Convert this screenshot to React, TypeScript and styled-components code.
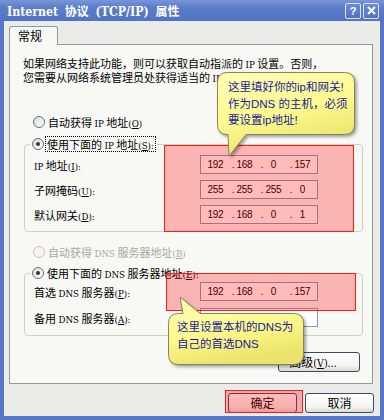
import * as React from 'react';
import styled, { createGlobalStyle } from 'styled-components';

const CJK = `"Noto Sans CJK SC", "Liberation Sans", sans-serif`;

const GlobalStyle = createGlobalStyle`
	*, *::before, *::after { box-sizing: border-box; }
	html, body { margin: 0; padding: 0; }
	body { background: #ffffff; overflow: hidden; }
`;

type CalloutProps = {
	x: number;
	y: number;
	w: number;
	h: number;
	tail: 'top' | 'bottom';
	base: [number, number];
	tip: [number, number];
	pt: number;
	pl: number;
	lh: number;
	children: React.ReactNode;
};

const Callout = ({ x, y, w, h, tail, base, tip, pt, pl, lh, children }: CalloutProps) => {
	const gid = React.useId().replace(/:/g, '');
	const r = 10;
	const o = 0.5;
	const R = w - 0.5;
	const B = h - 0.5;
	let d = '';
	if (tail === 'bottom') {
		d = `M${o + r},${o} H${R - r} Q${R},${o} ${R},${o + r} V${B - r} Q${R},${B} ${R - r},${B} H${base[1]} L${tip[0]},${tip[1]} L${base[0]},${B} H${o + r} Q${o},${B} ${o},${B - r} V${o + r} Q${o},${o} ${o + r},${o} Z`;
	} else {
		d = `M${o + r},${o} H${base[0]} L${tip[0]},${tip[1]} L${base[1]},${o} H${R - r} Q${R},${o} ${R},${o + r} V${B - r} Q${R},${B} ${R - r},${B} H${o + r} Q${o},${B} ${o},${B - r} V${o + r} Q${o},${o} ${o + r},${o} Z`;
	}
	return (
		<CalloutWrap $x={x} $y={y} $w={w} $h={h}>
			<CalloutShape width={w} height={h}>
				<defs>
					<linearGradient id={gid} x1="0" y1="0" x2="0.35" y2="1">
						<stop offset="0" stopColor="#ffffb8" />
						<stop offset="0.6" stopColor="#fbf88a" />
						<stop offset="1" stopColor="#ebe36c" />
					</linearGradient>
				</defs>
				<path d={d} fill={`url(#${gid})`} stroke="#85855a" strokeWidth="1" />
			</CalloutShape>
			<CalloutText $pt={pt} $pl={pl} $lh={lh}>
				{children}
			</CalloutText>
		</CalloutWrap>
	);
};

const IpField = ({ value }: { value?: string[] }) => (
	<IpBox>
		{[0, 1, 2, 3].map((i) => (
			<Octet key={i}>
				<Dot>{value && i > 0 ? '.' : ''}</Dot>
				<Num>{value ? value[i] : ''}</Num>
			</Octet>
		))}
	</IpBox>
);

const App = () => {
	return (
		<Window>
			<GlobalStyle />
			<TitleBar>
				<Title>
					<Lat $size={1.02}>Internet</Lat> 协议 <Lat $size={1.02}>(TCP/IP)</Lat> 属性
				</Title>
				<CaptionButton>?</CaptionButton>
				<CaptionButton>
					<svg width="9" height="9" viewBox="0 0 9 9">
						<path d="M1 1 L8 8 M8 1 L1 8" stroke="#fff" strokeWidth="2" />
					</svg>
				</CaptionButton>
			</TitleBar>

			<Frame>
				<TabStrip>
					<Tab>常规</Tab>
				</TabStrip>
				<Panel>
					<Intro>
						<IntroLine>
							如果网络支持此功能，则可以获取自动指派的 <Lat>IP</Lat> 设置。否则，
						</IntroLine>
						<IntroLine>
							您需要从网络系统管理员处获得适当的 <Lat>IP</Lat> 设置。
						</IntroLine>
					</Intro>

					<RadioRow $top={31}>
						<RadioDot />
						<span>
							自动获得 <Lat>IP</Lat> 地址<Lat>(<Key>O</Key>)</Lat>
						</span>
					</RadioRow>

					<Group $top={8} $pt={4} $pb={7}>
						<GroupLegend>
							<LegendRow>
								<RadioDot $checked />
								<FocusLabel>
									使用下面的 <Lat>IP</Lat> 地址<Lat>(<Key>S</Key>):</Lat>
								</FocusLabel>
							</LegendRow>
						</GroupLegend>
						<Rows $gap={6}>
							<FieldLabel>
								<Lat>IP</Lat> 地址<Lat>(<Key>I</Key>):</Lat>
							</FieldLabel>
							<IpField value={['192', '168', '0', '157']} />
							<FieldLabel>
								子网掩码<Lat>(<Key>U</Key>):</Lat>
							</FieldLabel>
							<IpField value={['255', '255', '255', '0']} />
							<FieldLabel>
								默认网关<Lat>(<Key>D</Key>):</Lat>
							</FieldLabel>
							<IpField value={['192', '168', '0', '1']} />
						</Rows>
					</Group>

					<RadioRow $top={13} $disabled>
						<RadioDot $disabled />
						<span>
							自动获得 <Lat>DNS</Lat> 服务器地址<Lat>(<Key>B</Key>)</Lat>
						</span>
					</RadioRow>

					<Group $top={7} $pt={2} $pb={8}>
						<GroupLegend>
							<LegendRow>
								<RadioDot $checked />
								<span>
									使用下面的 <Lat>DNS</Lat> 服务器地址<Lat>(<Key>E</Key>):</Lat>
								</span>
							</LegendRow>
						</GroupLegend>
						<Rows $gap={7}>
							<FieldLabel>
								首选 <Lat>DNS</Lat> 服务器<Lat>(<Key>P</Key>):</Lat>
							</FieldLabel>
							<IpField value={['192', '168', '0', '157']} />
							<FieldLabel>
								备用 <Lat>DNS</Lat> 服务器<Lat>(<Key>A</Key>):</Lat>
							</FieldLabel>
							<IpField />
						</Rows>
					</Group>

					<AdvancedRow>
						<Button $w={82} $padRight={12}>
							高级<Lat>(<Key>V</Key>)...</Lat>
						</Button>
					</AdvancedRow>
				</Panel>

				<Footer>
					<Button $w={69}>确定</Button>
					<Button $w={69}>取消</Button>
				</Footer>
			</Frame>

			<RedBox $x={164} $y={145} $w={190} $h={87} />
			<RedBox $x={166} $y={273} $w={190} $h={38} />
			<RedBox $x={225} $y={390} $w={78} $h={23} />

			<Callout x={217} y={72} w={138} h={63} tail="bottom" base={[11, 29]} tip={[12, 84]} pt={7} pl={11} lh={16.5}>
				这里填好你的ip和网关!
				<br />
				作为DNS 的主机，必须
				<br />
				要设置ip地址!
			</Callout>
			<Callout x={168} y={313} w={136} h={52} tail="top" base={[15, 32]} tip={[12, -16]} pt={6} pl={9} lh={17}>
				这里设置本机的DNS为
				<br />
				自己的首选DNS
			</Callout>
		</Window>
	);
};

const Window = styled.div`
	position: relative;
	width: 384px;
	height: 420px;
	overflow: hidden;
	display: flex;
	flex-direction: column;
	font-family: ${CJK};
	font-size: 11px;
	color: #000;
`;

const TitleBar = styled.div`
	height: 21px;
	flex: none;
	display: flex;
	align-items: center;
	padding: 0 5px 0 7px;
	background: linear-gradient(#7896d8, #5c7dca 35%, #5173c3);
`;

const Title = styled.div`
	flex: 1;
	color: #ffffff;
	font-weight: bold;
	font-size: 12px;
	line-height: 21px;
	word-spacing: 4px;
	white-space: nowrap;
`;

const Lat = styled.span<{ $size?: number }>`
	font-family: 'DejaVu Serif Condensed', 'DejaVu Serif', serif;
	font-stretch: condensed;
	font-size: ${(p) => p.$size ?? 0.88}em;
	line-height: 0;
	word-spacing: 0;
`;

const Key = styled.span`
	text-decoration: underline;
`;

const CaptionButton = styled.div`
	width: 16px;
	height: 16px;
	border: 1px solid #dce4f6;
	border-radius: 2px;
	background: linear-gradient(#6d8cd8, #5072c4);
	color: #ffffff;
	font: bold 11px 'Liberation Sans', sans-serif;
	display: flex;
	align-items: center;
	justify-content: center;
	& + & {
		margin-left: 2px;
	}
`;

const Frame = styled.div`
	flex: 1;
	min-height: 0;
	display: flex;
	flex-direction: column;
	background: #ebebe8;
	border: 4px solid #5577c6;
	border-top: 0;
	padding: 5px 7px 3px 5px;
`;

const TabStrip = styled.div`
	display: flex;
`;

const Tab = styled.div`
	position: relative;
	z-index: 1;
	width: 49px;
	height: 19px;
	margin-bottom: -1px;
	border: 1px solid #919b9c;
	border-top-color: #7f9db9;
	border-bottom: 0;
	border-radius: 3px 3px 0 0;
	background: #f8f8f5;
	font-size: 12px;
	line-height: 18px;
	padding-left: 8px;
`;

const Panel = styled.div`
	flex: none;
	border: 1px solid #919b9c;
	background: #f8f8f5;
	padding: 11px 9px 11px 14px;
	display: flex;
	flex-direction: column;
`;

const Intro = styled.div`
	margin-left: -1px;
`;

const IntroLine = styled.div`
	height: 14px;
	line-height: 14px;
	white-space: nowrap;
`;

const RadioRow = styled.div<{ $top: number; $disabled?: boolean }>`
	display: flex;
	align-items: center;
	gap: 3px;
	height: 14px;
	line-height: 14px;
	white-space: nowrap;
	margin: ${(p) => p.$top}px 0 0 9px;
	color: ${(p) => (p.$disabled ? '#aca899' : '#000000')};
`;

const RadioDot = styled.span<{ $checked?: boolean; $disabled?: boolean }>`
	position: relative;
	flex: none;
	width: 12px;
	height: 12px;
	border-radius: 50%;
	border: 1px solid ${(p) => (p.$disabled ? '#cac8bb' : '#5d7190')};
	background: ${(p) => (p.$disabled ? '#f5f4ee' : 'linear-gradient(135deg, #dadad3, #ffffff)')};
	&::after {
		content: '';
		display: ${(p) => (p.$checked ? 'block' : 'none')};
		position: absolute;
		left: 3px;
		top: 3px;
		width: 4px;
		height: 4px;
		border-radius: 50%;
		background: #2e3a2e;
	}
`;

const Group = styled.fieldset<{ $top: number; $pt: number; $pb: number }>`
	margin: ${(p) => p.$top}px 0 0;
	padding: ${(p) => p.$pt}px 8px ${(p) => p.$pb}px 9px;
	border: 1px solid #d0d0bf;
	border-radius: 4px;
	min-width: 0;
`;

const GroupLegend = styled.legend`
	padding: 0 2px;
	margin-left: -4px;
	height: 14px;
	line-height: 14px;
`;

const LegendRow = styled.span`
	display: flex;
	align-items: center;
	gap: 3px;
	height: 14px;
	line-height: 14px;
	white-space: nowrap;
`;

const FocusLabel = styled.span`
	outline: 1px dotted #000000;
	padding: 0 1px;
	margin-left: -1px;
`;

const Rows = styled.div<{ $gap: number }>`
	display: grid;
	grid-template-columns: 166px 118px;
	grid-auto-rows: 19px;
	row-gap: ${(p) => p.$gap}px;
	align-items: center;
`;

const FieldLabel = styled.span`
	white-space: nowrap;
	line-height: 14px;
`;

const IpBox = styled.div`
	height: 19px;
	border: 1px solid #7f9db9;
	background: #ffffff;
	display: grid;
	grid-template-columns: repeat(4, 1fr);
	font-family: 'Liberation Sans', sans-serif;
	font-size: 10px;
	letter-spacing: -0.3px;
	color: #000000;
`;

const Octet = styled.span`
	display: grid;
	grid-template-columns: 6px 1fr 6px;
	align-items: center;
	line-height: 17px;
`;

const Dot = styled.span`
	text-align: center;
`;

const Num = styled.span`
	text-align: center;
`;

const AdvancedRow = styled.div`
	display: flex;
	justify-content: flex-end;
	margin: 16px 3px 0 0;
`;

const Button = styled.button<{ $w: number; $padRight?: number }>`
	width: ${(p) => p.$w}px;
	height: 20px;
	padding: 0 ${(p) => p.$padRight ?? 0}px 0 0;
	border: 1px solid #3b4b6b;
	border-radius: 3px;
	background: linear-gradient(#ffffff, #f4f4f0 70%, #dcd9d0);
	font-family: ${CJK};
	font-size: 12px;
	line-height: 18px;
	color: #000000;
`;

const Footer = styled.div`
	display: flex;
	justify-content: flex-end;
	gap: 8px;
	margin: 9px -1px 0 0;
`;

const RedBox = styled.div<{ $x: number; $y: number; $w: number; $h: number }>`
	position: absolute;
	left: ${(p) => p.$x}px;
	top: ${(p) => p.$y}px;
	width: ${(p) => p.$w}px;
	height: ${(p) => p.$h}px;
	border: 1px solid #ff1a1a;
	background: rgba(255, 0, 0, 0.27);
	pointer-events: none;
`;

const CalloutWrap = styled.div<{ $x: number; $y: number; $w: number; $h: number }>`
	position: absolute;
	left: ${(p) => p.$x}px;
	top: ${(p) => p.$y}px;
	width: ${(p) => p.$w}px;
	height: ${(p) => p.$h}px;
	pointer-events: none;
`;

const CalloutShape = styled.svg`
	position: absolute;
	left: 0;
	top: 0;
	overflow: visible;
	filter: drop-shadow(2px 2px 1.5px rgba(0, 0, 0, 0.35));
`;

const CalloutText = styled.div<{ $pt: number; $pl: number; $lh: number }>`
	position: relative;
	padding: ${(p) => p.$pt}px 0 0 ${(p) => p.$pl}px;
	line-height: ${(p) => p.$lh}px;
	font-family: 'Liberation Sans', 'Noto Sans CJK SC', sans-serif;
	font-size: 11.5px;
	color: #1a1a9e;
	white-space: nowrap;
`;

export default App;
